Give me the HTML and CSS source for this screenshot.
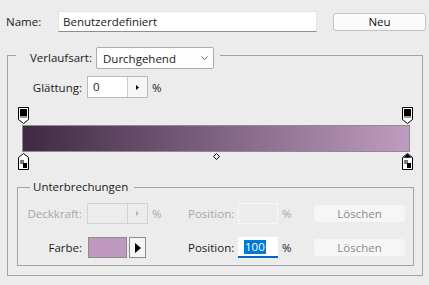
FILE: index.html
```html
<!DOCTYPE html>
<html lang="de">
<head>
  <meta charset="UTF-8" />
  <title>Verlaufseditor</title>
  <link rel="stylesheet" href="styles.css">
</head>
<body>
  <div class="name-row">
    <span class="name-label">Name:</span>
    <div class="name-input">Benutzerdefiniert</div>
    <button class="btn-new">Neu</button>
  </div>

  <fieldset class="group">
    <legend class="group-head">
      <span class="head-label">Verlaufsart:</span>
      <div class="select">
        <span>Durchgehend</span>
        <svg width="7" height="4" viewBox="0 0 7 4"><path d="M0.5 0.5L3.5 3.5L6.5 0.5" fill="none" stroke="#6a6a6a"/></svg>
      </div>
    </legend>

    <div class="row smooth-row">
      <span class="lbl">Glättung:</span>
      <div class="spin">
        <span class="spin-val">0</span>
        <span class="spin-btn"><svg width="3" height="5" viewBox="0 0 3 5"><path d="M0 0L3 2.5L0 5Z" fill="#000"/></svg></span>
      </div>
      <span class="pct">%</span>
    </div>

    <div class="ramp">
      <div class="stops stops-top">
        <svg class="stop" style="left: 0%" width="11" height="17" viewBox="0 0 11 17">
          <path d="M0.5 0.5H10.5V12.5L5.5 16.5L0.5 12.5Z" fill="#fff" stroke="#000"/>
          <rect x="2" y="2" width="7" height="7" fill="#000"/>
          <rect x="2" y="9" width="7" height="2" fill="#9a9a9a"/>
        </svg>
        <svg class="stop" style="left: 100%" width="11" height="17" viewBox="0 0 11 17">
          <path d="M0.5 0.5H10.5V12.5L5.5 16.5L0.5 12.5Z" fill="#fff" stroke="#000"/>
          <rect x="2" y="2" width="7" height="7" fill="#000"/>
          <rect x="2" y="9" width="7" height="2" fill="#9a9a9a"/>
        </svg>
      </div>
      <div class="bar"></div>
      <div class="stops stops-bottom">
        <svg class="stop" style="left: 0%" width="11" height="17" viewBox="0 0 11 17">
          <path d="M0.5 16.5H10.5V4.5L5.5 0.5L0.5 4.5Z" fill="#fff" stroke="#000"/>
          <rect x="2" y="7" width="4" height="4" fill="#7a7a7a"/>
          <rect x="5" y="10" width="4" height="5" fill="#000"/>
        </svg>
        <svg class="mid" style="left: 50%" width="7" height="7" viewBox="0 0 7 7">
          <path d="M3.5 0.5L6.5 3.5L3.5 6.5L0.5 3.5Z" fill="#ececec" stroke="#000"/>
        </svg>
        <svg class="stop" style="left: 100%" width="11" height="17" viewBox="0 0 11 17">
          <path d="M0.5 16.5H10.5V4.5L5.5 0.5L0.5 4.5Z" fill="#fff" stroke="#000"/>
          <path d="M1 4.8L5.5 1L10 4.8Z" fill="#000"/>
          <rect x="2" y="7" width="4" height="4" fill="#7a7a7a"/>
          <rect x="5" y="10" width="4" height="5" fill="#000"/>
        </svg>
      </div>
    </div>

    <fieldset class="stops-group">
      <legend class="stops-head">Unterbrechungen</legend>

      <div class="row stop-row disabled">
        <span class="lbl">Deckkraft:</span>
        <div class="spin">
          <span class="spin-val"></span>
          <span class="spin-btn"><svg width="3" height="5" viewBox="0 0 3 5"><path d="M0 0L3 2.5L0 5Z" fill="#b4b4b4"/></svg></span>
        </div>
        <span class="pct">%</span>
        <span class="pos-lbl">Position:</span>
        <div class="pos-input"></div>
        <span class="pct2">%</span>
        <button class="btn-del">Löschen</button>
      </div>

      <div class="row stop-row">
        <span class="lbl">Farbe:</span>
        <div class="color-field">
          <span class="swatch"></span>
          <span class="swatch-btn"><svg width="6" height="10" viewBox="0 0 6 10"><path d="M0 0L6 5L0 10Z" fill="#000"/></svg></span>
        </div>
        <span class="pct"></span>
        <span class="pos-lbl">Position:</span>
        <div class="pos-input focused"><span class="sel">100</span></div>
        <span class="pct2">%</span>
        <button class="btn-del">Löschen</button>
      </div>
    </fieldset>
  </fieldset>
</body>
</html>
```

FILE: styles.css
```css
/* gradient editor dialog */
:root {
  --panel: #ececec;
  --text: #1a1a1a;
  --muted: #a6a6a6;
  --line: #a3a3a3;
}
html, body {
  margin: 0;
  padding: 0;
  background: var(--panel);
  font-family: 'Open Sans', Arial, sans-serif;
  font-size: 11.5px;
  color: var(--text);
}
button {
  font-family: inherit;
  font-size: 11.5px;
  padding: 0;
  cursor: pointer;
}

/* name row */
.name-row {
  display: flex;
  align-items: center;
  padding: 11px 0 0 6px;
  height: 21px;
}
.name-label {
  width: 52px;
}
.name-input {
  width: 259px;
  height: 21px;
  box-sizing: border-box;
  background: #fff;
  border: 1px solid #e4e4e4;
  border-bottom-color: #8e8e8e;
  padding-left: 4px;
  line-height: 19px;
}
.btn-new {
  margin-left: 16px;
  width: 93px;
  height: 18px;
  background: #fbfbfb;
  border: 1px solid #c3c3c3;
  border-radius: 3px;
  color: #111;
  line-height: 16px;
}

/* outer group */
.group {
  margin: 15px 0 0 7px;
  width: 416px;
  box-sizing: border-box;
  padding: 0 0 9px 0;
  border: 1px solid var(--line);
  min-inline-size: 0;
}
.group-head {
  display: flex;
  align-items: flex-start;
  height: 16px;
  margin-left: 8px;
  padding: 0 6px 0 14px;
}
.head-label {
  width: 66px;
  line-height: 22px;
}
.select {
  width: 118px;
  height: 22px;
  box-sizing: border-box;
  display: flex;
  align-items: center;
  justify-content: space-between;
  padding: 0 5px 0 6px;
  background: #fdfdfd;
  border: 1px solid #acacac;
  border-radius: 2px;
}

/* rows */
.row {
  display: flex;
  align-items: center;
  height: 21px;
}
.lbl {
  text-align: right;
  padding-right: 5px;
  box-sizing: border-box;
}
.smooth-row {
  margin-top: 13px;
  height: 22px;
}
.smooth-row .lbl {
  width: 79px;
}
.spin {
  width: 61px;
  height: 100%;
  box-sizing: border-box;
  display: flex;
  background: #fff;
  border: 1px solid #bababa;
}
.spin-val {
  flex: 1;
  padding-left: 5px;
  line-height: 20px;
}
.spin-btn {
  width: 19px;
  display: flex;
  align-items: center;
  justify-content: center;
  background: #f6f6f6;
  border-left: 1px solid #cacaca;
}
.pct {
  width: 40px;
  padding-left: 4px;
  box-sizing: border-box;
}

/* gradient ramp */
.ramp {
  margin-top: 9px;
}
.stops {
  position: relative;
  height: 18px;
  margin: 0 15px;
}
.stop {
  position: absolute;
  top: 1px;
  margin-left: -5px;
}
.stops-top .stop {
  top: 0;
}
.mid {
  position: absolute;
  top: 1px;
  margin-left: -2px;
}
.bar {
  height: 27px;
  box-sizing: border-box;
  margin: 0 12px 0 14px;
  border: 1px solid #8c8c8c;
  background: linear-gradient(to right, #3f2944, #c09bc0);
}

/* stops group */
.stops-group {
  margin: 9px 8px 0 9px;
  padding: 0 0 7px 0;
  border: 1px solid var(--line);
  min-inline-size: 0;
}
.stops-head {
  margin-left: 12px;
  padding: 0 6px 0 3px;
  line-height: 16px;
}
.stop-row {
  margin-top: 13px;
}
.stop-row:first-of-type {
  margin-top: 8px;
}
.stop-row .lbl {
  width: 69px;
}
.pos-lbl {
  width: 50px;
}
.pos-input {
  width: 40px;
  height: 100%;
  box-sizing: border-box;
  border: 1px solid #f7f7f7;
}
.pos-input.focused {
  background: #fff;
  border: none;
  border-bottom: 2px solid #0a64c4;
  padding: 2px 0 0 6px;
}
.sel {
  display: inline-block;
  background: #0078d7;
  color: #fff;
  line-height: 14px;
  padding: 0 1px;
}
.pct2 {
  width: 36px;
  padding-left: 4px;
  box-sizing: border-box;
}
.btn-del {
  width: 91px;
  height: 17px;
  background: #f6f6f6;
  border: none;
  border-radius: 3px;
  color: #8a8a8a;
  line-height: 17px;
}

/* disabled state */
.disabled {
  color: var(--muted);
}
.disabled .spin {
  background: transparent;
  border-color: #d2d2d2;
}
.disabled .spin-btn {
  background: transparent;
  border-left-color: #d2d2d2;
}

/* colour field */
.color-field {
  width: 61px;
  height: 100%;
  display: flex;
  gap: 2px;
  padding-left: 1px;
  box-sizing: border-box;
}
.swatch {
  width: 39px;
  background: #bf98bf;
  border: 1px solid #8c8c8c;
  box-sizing: border-box;
}
.swatch-btn {
  width: 17px;
  display: flex;
  align-items: center;
  justify-content: center;
  box-sizing: border-box;
  background: #f4f4f4;
  border: 1px solid #8c8c8c;
}
```
